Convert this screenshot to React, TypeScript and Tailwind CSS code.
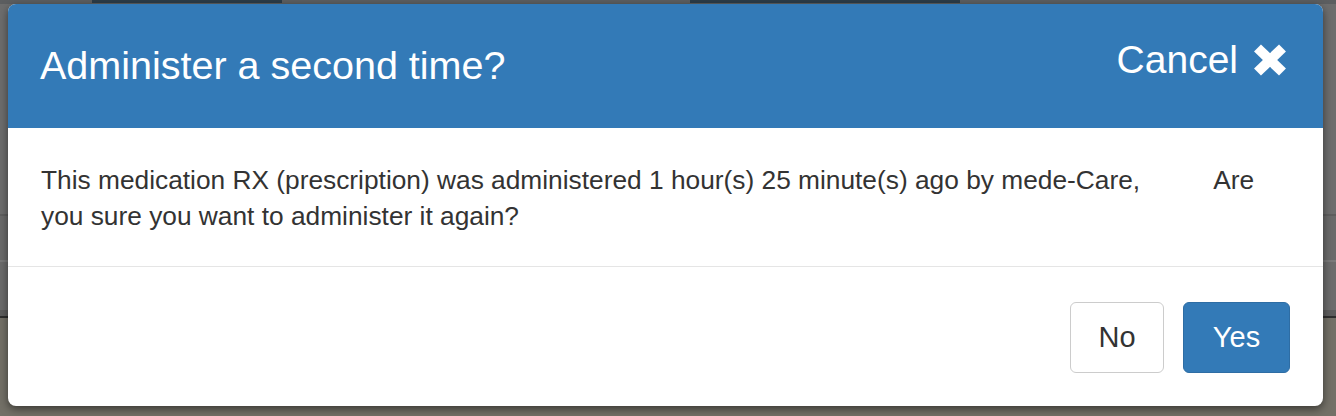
import { type ReactNode } from 'react';

const font = { fontFamily: '"Liberation Sans", Arial, Helvetica, sans-serif' };

function HeavyX() {
  return (
    <svg width="34" height="32" viewBox="0 0 34 32" aria-hidden>
      <g stroke="#fff" strokeWidth="10" strokeLinecap="butt">
        <line x1="4.5" y1="4" x2="29.5" y2="28" />
        <line x1="29.5" y1="4" x2="4.5" y2="28" />
      </g>
    </svg>
  );
}

function Button({ primary, className, children }: { primary?: boolean; className?: string; children: ReactNode }) {
  return (
    <button
      type="button"
      className={
        'flex h-[71px] items-center justify-center rounded-[6px] border text-[29px] leading-none ' +
        (primary
          ? 'border-[#2e6da4] bg-[#337ab7] text-white '
          : 'border-[#cccccc] bg-white text-[#333333] ') +
        (className ?? '')
      }
    >
      {children}
    </button>
  );
}

// dimmed page that sits behind the dialog
function Backdrop() {
  return (
    <div className="flex h-full w-full flex-col bg-[#6b6b6b]">
      <div className="relative h-[4px] bg-[#5c5e60]">
        <div className="absolute left-[92px] top-0 h-[3px] w-[190px] bg-[#2c3c48]" />
        <div className="absolute left-[690px] top-0 h-[3px] w-[270px] bg-[#2c3c48]" />
      </div>
      <div className="h-[210px] bg-[#6d6d6d]" />
      <div className="h-[2px] bg-[#5e5e5e]" />
      <div className="h-[44px] bg-[#6a6a6a]" />
      <div className="h-[2px] bg-[#7a7a7a]" />
      <div className="h-[48px] bg-[#6c6c6c]" />
      <div className="h-[6px] bg-[#5d5d5d]" />
      <div className="h-[2px] bg-[#2e2e2e]" />
      <div className="flex-1 bg-[#737067]" />
    </div>
  );
}

export default function App() {
  return (
    <div className="relative h-[416px] w-[1336px] overflow-hidden" style={font}>
      <Backdrop />

      <div className="absolute left-[8px] top-[4px] flex h-[402px] w-[1315px] flex-col overflow-hidden rounded-[8px] bg-white shadow-[0_3px_9px_rgba(0,0,0,0.5)]">
        <div className="flex h-[124px] shrink-0 items-center justify-between bg-[#337ab7] pl-[32px] pr-[36px] text-white">
          <h4 className="text-[39.5px] leading-none">Administer a second time?</h4>
          <button type="button" className="mb-[13px] flex items-center gap-[15px] text-[39px] leading-none">
            Cancel
            <HeavyX />
          </button>
        </div>

        <div className="border-b border-[#e5e5e5] px-[33px] pb-[32px] pt-[34px] text-[26.3px] leading-[36px] text-[#333333]">
          This medication RX (prescription) was administered 1 hour(s) 25 minute(s) ago by mede-Care,{' '}
          <span className="inline-block w-[60px]" /> Are you sure you want to administer it again?
        </div>

        <div className="flex flex-1 items-start justify-end gap-[19px] pr-[33px] pt-[35px]">
          <Button className="w-[94px]">No</Button>
          <Button primary className="w-[107px]">
            Yes
          </Button>
        </div>
      </div>
    </div>
  );
}
